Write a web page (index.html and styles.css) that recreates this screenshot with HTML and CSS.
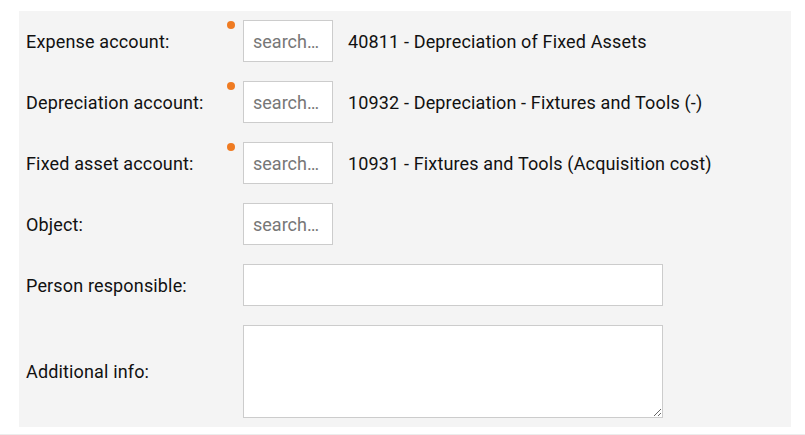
FILE: index.html
```html
<!DOCTYPE html>
<html>
<head>
<meta charset="utf-8">
<link rel="stylesheet" href="styles.css">
</head>
<body>
<div class="page">
  <div class="panel">
    <div class="row">
      <div class="label">Expense account:</div>
      <div class="field">
        <span class="req"></span>
        <input class="search" type="text" placeholder="search…">
        <span class="value">40811 - Depreciation of Fixed Assets</span>
      </div>
    </div>
    <div class="row">
      <div class="label">Depreciation account:</div>
      <div class="field">
        <span class="req"></span>
        <input class="search" type="text" placeholder="search…">
        <span class="value">10932 - Depreciation - Fixtures and Tools (-)</span>
      </div>
    </div>
    <div class="row">
      <div class="label">Fixed asset account:</div>
      <div class="field">
        <span class="req"></span>
        <input class="search" type="text" placeholder="search…">
        <span class="value">10931 - Fixtures and Tools (Acquisition cost)</span>
      </div>
    </div>
    <div class="row">
      <div class="label">Object:</div>
      <div class="field">
        <input class="search" type="text" placeholder="search…">
      </div>
    </div>
    <div class="row">
      <div class="label">Person responsible:</div>
      <div class="field">
        <input class="wide" type="text">
      </div>
    </div>
    <div class="row">
      <div class="label">Additional info:</div>
      <div class="field">
        <textarea class="area"></textarea>
      </div>
    </div>
  </div>
  <div class="rule"></div>
</div>
</body>
</html>
```
FILE: styles.css
```css
html, body {
  margin: 0;
  padding: 0;
  background: #fff;
}
body {
  font-family: Roboto, "Liberation Sans", sans-serif;
  font-size: 18px;
  letter-spacing: 0.15px;
  color: #111;
}
.page {
  padding-top: 11px;
}
.panel {
  margin-left: 19px;
  width: 772px;
  box-sizing: border-box;
  background: #f4f4f4;
  padding: 9px 7px;
  display: flex;
  flex-direction: column;
  gap: 19px;
}
.row {
  display: flex;
  align-items: center;
}
.label {
  width: 217px;
  flex: none;
}
.field {
  position: relative;
  display: flex;
  align-items: center;
}
.req {
  position: absolute;
  left: -16px;
  top: 1px;
  width: 8px;
  height: 8px;
  border-radius: 50%;
  background: #ef7b22;
}
input, textarea {
  font-family: Roboto, "Liberation Sans", sans-serif;
  font-size: 18px;
  color: #111;
  border: 1px solid #cccccc;
  background: #fff;
  box-sizing: border-box;
  outline: none;
  margin: 0;
}
.search {
  width: 90px;
  height: 42px;
  padding: 0 9px;
}
.search::placeholder {
  color: #777;
}
.value {
  margin-left: 15px;
}
.wide {
  width: 420px;
  height: 42px;
  padding: 0 9px;
}
.area {
  width: 420px;
  height: 93px;
  padding: 6px 9px;
  display: block;
}
.rule {
  margin-top: 7px;
  border-top: 1px solid #ececec;
}
```
